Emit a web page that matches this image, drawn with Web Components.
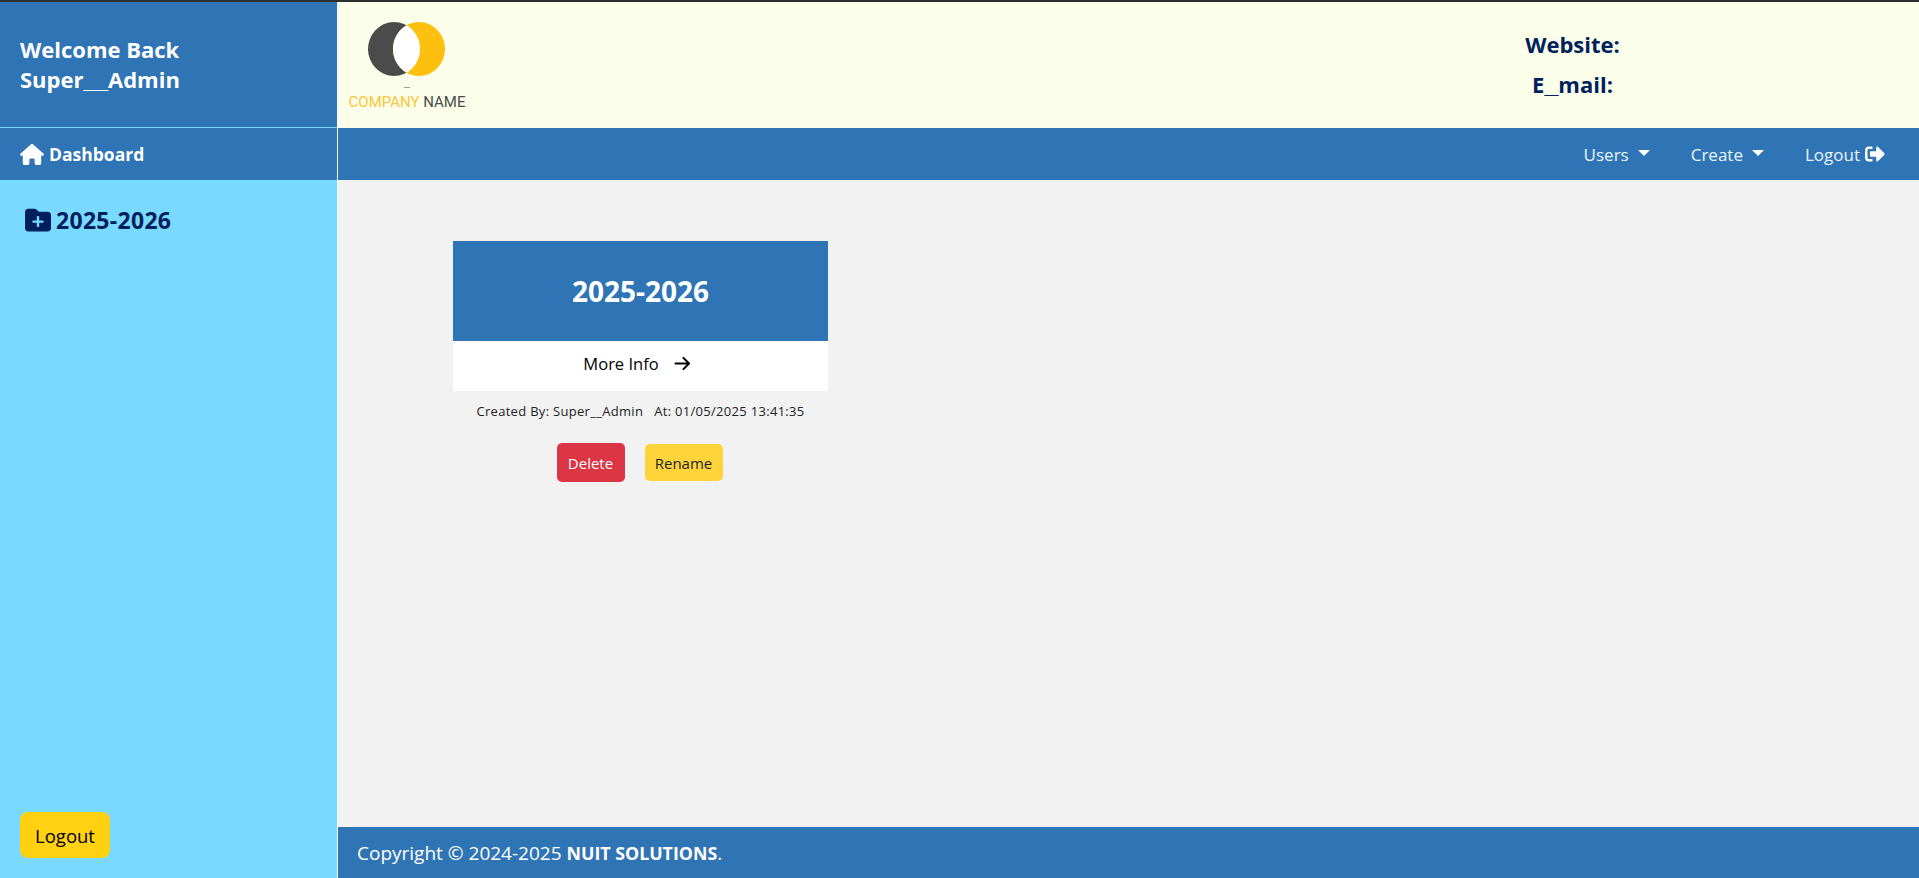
<!DOCTYPE html>
<html lang="en">
<head>
<meta charset="utf-8">
<title>Dashboard</title>
<style>
  html, body { margin: 0; height: 100%; }
  body { font-family: "Open Sans", "Noto Sans", sans-serif; overflow: hidden; }
</style>
</head>
<body>
<app-shell>
  <side-bar slot="side"></side-bar>
  <top-header slot="header"></top-header>
  <nav-bar slot="nav"></nav-bar>
  <year-card slot="main" year="2025-2026" user="Super__Admin" stamp="01/05/2025 13:41:35"></year-card>
  <app-footer slot="footer"></app-footer>
</app-shell>

<script>
const ICONS = {
  house: '<svg viewBox="0 0 576 512" fill="currentColor"><path d="M575.8 255.5c0 18-15 32.1-32 32.1h-32l.7 160.2c0 2.7-.2 5.4-.5 8.1V472c0 22.1-17.9 40-40 40H456c-1.1 0-2.2 0-3.3-.1c-1.4 .1-2.8 .1-4.2 .1H416 392c-22.1 0-40-17.9-40-40V448 384c0-17.7-14.3-32-32-32H256c-17.7 0-32 14.3-32 32v64 24c0 22.1-17.9 40-40 40H160 128.1c-1.5 0-3-.1-4.5-.2c-1.2 .1-2.4 .2-3.6 .2H104c-22.1 0-40-17.9-40-40V360c0-.9 0-1.9 .1-2.8V287.6H32c-18 0-32-14-32-32.1c0-9 3-17 10-24L266.4 8c7-7 15-8 22-8s15 2 21 7L564.8 231.5c8 7 12 15 11 24z"/></svg>',
  folderPlus: '<svg viewBox="0 0 512 512" fill="currentColor"><path d="M512 416c0 35.3-28.7 64-64 64H64c-35.3 0-64-28.7-64-64V96C0 60.7 28.7 32 64 32H181.5c17 0 33.3 6.7 45.3 18.7l26.5 26.5c12 12 28.3 18.7 45.3 18.7H448c35.3 0 64 28.7 64 64V416zM232 376c0 13.3 10.7 24 24 24s24-10.7 24-24V312h64c13.3 0 24-10.7 24-24s-10.7-24-24-24H280V200c0-13.3-10.7-24-24-24s-24 10.7-24 24v64H168c-13.3 0-24 10.7-24 24s10.7 24 24 24h64v64z"/></svg>',
  signOut: '<svg viewBox="0 0 512 512" fill="currentColor"><path d="M497 273L329 441c-15 15-41 4.5-41-17v-96H152c-13.3 0-24-10.7-24-24v-96c0-13.3 10.7-24 24-24h136V88c0-21.4 25.9-32 41-17l168 168c9.3 9.4 9.3 24.6 0 34zM192 436v-40c0-6.6-5.4-12-12-12H96c-17.7 0-32-14.3-32-32V160c0-17.7 14.3-32 32-32h84c6.6 0 12-5.4 12-12V76c0-6.6-5.4-12-12-12H96c-53 0-96 43-96 96v192c0 53 43 96 96 96h84c6.6 0 12-5.4 12-12z"/></svg>',
  arrow: '<svg viewBox="0 0 18 16" fill="none" stroke="currentColor" stroke-width="2.2" stroke-linecap="round" stroke-linejoin="round"><path d="M1.5 8H16M10 2l6 6-6 6"/></svg>'
};

class AppShell extends HTMLElement {
  constructor() {
    super();
    this.attachShadow({ mode: "open" });
    this.shadowRoot.innerHTML = `
      <style>
        :host {
          display: grid;
          grid-template-columns: 337px 1px 1fr;
          grid-template-rows: 125px 1px 52px 1fr 51px;
          height: 876px;
          border-top: 2px solid #2e2e2e;
          background: #f2f2f2;
        }
        ::slotted([slot="side"]) { grid-column: 1; grid-row: 1 / 6; }
        .rule { grid-column: 2; grid-row: 1 / 6; background: #fff; }
        .rule-top { grid-column: 2; grid-row: 1 / 3; background: #fbffea; z-index: 1; }
        ::slotted([slot="header"]) { grid-column: 3; grid-row: 1 / 3; }
        ::slotted([slot="nav"]) { grid-column: 3; grid-row: 3; }
        main { grid-column: 3; grid-row: 4; padding: 61px 0 0 115px; }
        ::slotted([slot="footer"]) { grid-column: 3; grid-row: 5; }
      </style>
      <slot name="side"></slot>
      <div class="rule"></div>
      <div class="rule-top"></div>
      <slot name="header"></slot>
      <slot name="nav"></slot>
      <main><slot name="main"></slot></main>
      <slot name="footer"></slot>
    `;
  }
}

class SideBar extends HTMLElement {
  constructor() {
    super();
    this.attachShadow({ mode: "open" });
    this.shadowRoot.innerHTML = `
      <style>
        :host { display: flex; flex-direction: column; background: #79d9ff; }
        .welcome {
          height: 126px; box-sizing: border-box; padding: 32px 20px 0;
          background: #2f74b5; color: #fff; font-weight: 700; font-size: 22px; line-height: 30px;
          border-bottom: 1px solid #79d9ff;
          flex: none;
        }
        .u { font-family: "Liberation Sans", sans-serif; font-size: 22px; line-height: 0; }
        .dash {
          height: 52px; flex: none; display: flex; align-items: center; gap: 5px; padding-left: 20px;
          background: #2f74b5; color: #fff; font-weight: 700; font-size: 17.5px;
        }
        .dash svg { width: 24px; height: 21px; }
        .year {
          display: flex; align-items: center; gap: 5px; margin: 25px 0 0 25px;
          color: #001f5c; font-weight: 700; font-size: 23px; line-height: 30px; letter-spacing: .3px;
        }
        .year svg { width: 26px; height: 26px; }
        button {
          margin: auto 0 20px 20px; width: 90px; height: 46px; padding: 1px 0 0; border: 0; border-radius: 8px;
          background: #ffd110; color: #000; font: inherit; font-size: 18.5px;
        }
      </style>
      <div class="welcome">Welcome Back<br>Super<span class="u">__</span>Admin</div>
      <div class="dash">${ICONS.house}<span>Dashboard</span></div>
      <div class="year">${ICONS.folderPlus}<span>2025-2026</span></div>
      <button>Logout</button>
    `;
  }
}

class TopHeader extends HTMLElement {
  constructor() {
    super();
    this.attachShadow({ mode: "open" });
    this.shadowRoot.innerHTML = `
      <style>
        :host { display: flex; justify-content: space-between; background: #fbffea; }
        .logo { display: flex; flex-direction: column; align-items: center; width: 116px; margin-left: 11px; padding-top: 19px; }
        .logo svg { width: 78px; height: 56px; }
        .logo i { width: 6px; height: 1px; margin-top: 10px; background: #9a9a9a; }
        .name {
          margin-top: 5px; font-family: Roboto, sans-serif; font-size: 15px; line-height: 18px;
          color: #4a4a4a; white-space: nowrap;
        }
        .name b { font-weight: 400; color: #f9c63a; }
        .contact {
          width: 121px; margin-right: 286px; padding-top: 22px; text-align: center;
          color: #001f5c; font-weight: 700; font-size: 22px; line-height: 40px;
        }
        .u { font-family: "Liberation Sans", sans-serif; font-size: 25px; line-height: 0; }
      </style>
      <div class="logo">
        <svg viewBox="0 0 78 56">
          <ellipse cx="26" cy="28" rx="26" ry="27" fill="#4b4b4b"/>
          <ellipse cx="51" cy="28" rx="26" ry="27" fill="#fdc00f"/>
          <path d="M38.5 4.3A26 27 0 0 1 38.5 51.7A26 27 0 0 1 38.5 4.3z" fill="#fff"/>
        </svg>
        <i></i>
        <div class="name"><b>COMPANY</b> NAME</div>
      </div>
      <div class="contact">
        <div>Website:</div>
        <div>E<span class="u">_</span>mail:</div>
      </div>
    `;
  }
}

class NavBar extends HTMLElement {
  constructor() {
    super();
    this.attachShadow({ mode: "open" });
    this.shadowRoot.innerHTML = `
      <style>
        :host {
          display: flex; justify-content: flex-end; align-items: center; gap: 41px; padding-right: 34px;
          background: #2f74b5; color: #e8f7ff; font-size: 17px;
        }
        span { display: flex; align-items: center; }
        i { width: 0; height: 0; margin-left: 9px; margin-bottom: 3px;
            border: 6px solid transparent; border-top: 6px solid #fff; border-bottom: 0; }
        svg { width: 20px; height: 20px; margin-left: 5px; color: #fff; }
      </style>
      <span>Users<i></i></span>
      <span>Create<i></i></span>
      <span>Logout${ICONS.signOut}</span>
    `;
  }
}

class YearCard extends HTMLElement {
  constructor() {
    super();
    this.attachShadow({ mode: "open" });
    const at = this.getAttribute("stamp");
    this.shadowRoot.innerHTML = `
      <style>
        :host { display: block; width: 375px; }
        .title {
          height: 100px; padding-bottom: 1px; box-sizing: border-box; display: flex; align-items: center; justify-content: center;
          background: #2f74b5; color: #fff; font-weight: 700; font-size: 28px;
        }
        .more {
          height: 50px; padding: 0 7px 5px 0; box-sizing: border-box; display: flex; align-items: center; justify-content: center; gap: 15px;
          background: #fff; color: #000; font-size: 16.5px;
        }
        .more svg { width: 17px; height: 15px; }
        .meta {
          margin-top: 10px; text-align: center; font-size: 13px; line-height: 20px; color: #222;
          white-space: pre; letter-spacing: .3px;
        }
        .actions { display: flex; justify-content: center; align-items: center; gap: 20px; margin-top: 22px; padding-right: 2px; }
        button { border: 0; border-radius: 5px; font: inherit; font-size: 15px; padding: 0; }
        .del { width: 68px; height: 39px; background: #dc3545; color: #fff; }
        .ren { width: 78px; height: 37px; background: #ffd43b; color: #212529; }
      </style>
      <div class="title">${this.getAttribute("year")}</div>
      <div class="more"><span>More Info</span>${ICONS.arrow}</div>
      <div class="meta">Created By: ${this.getAttribute("user")}   At: ${at}</div>
      <div class="actions">
        <button class="del">Delete</button>
        <button class="ren">Rename</button>
      </div>
    `;
  }
}

class AppFooter extends HTMLElement {
  constructor() {
    super();
    this.attachShadow({ mode: "open" });
    this.shadowRoot.innerHTML = `
      <style>
        :host {
          display: flex; align-items: center; padding-left: 19px;
          background: #2f74b5; color: #fff; font-size: 19px;
        }
        b { font-size: 17.8px; }
      </style>
      <div>Copyright © 2024-2025 <b>NUIT SOLUTIONS</b>.</div>
    `;
  }
}

customElements.define("app-shell", AppShell);
customElements.define("side-bar", SideBar);
customElements.define("top-header", TopHeader);
customElements.define("nav-bar", NavBar);
customElements.define("year-card", YearCard);
customElements.define("app-footer", AppFooter);
</script>
</body>
</html>
